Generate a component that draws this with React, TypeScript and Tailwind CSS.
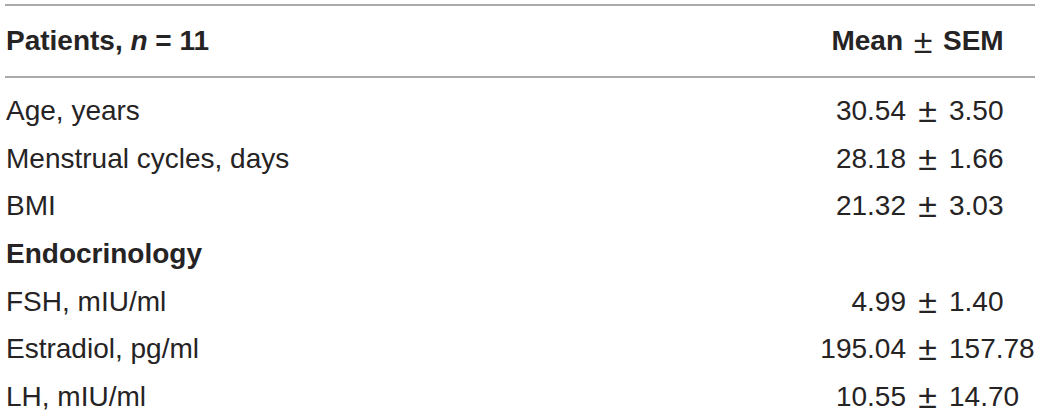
import React from "react";

const rows: Array<{ label: string; a?: string; b?: string; bold?: boolean }> = [
  { label: "Age, years", a: "30.54", b: "3.50" },
  { label: "Menstrual cycles, days", a: "28.18", b: "1.66" },
  { label: "BMI", a: "21.32", b: "3.03" },
  { label: "Endocrinology", bold: true },
  { label: "FSH, mIU/ml", a: "4.99", b: "1.40" },
  { label: "Estradiol, pg/ml", a: "195.04", b: "157.78" },
  { label: "LH, mIU/ml", a: "10.55", b: "14.70" },
];

export default function App() {
  return (
    <div
      className="w-[1040px] h-[415px] overflow-hidden bg-white text-[#262324]"
      style={{ fontFamily: '"Liberation Sans", Arial, Helvetica, sans-serif' }}
    >
      <div className="ml-[5px] w-[1030px] pt-[4px]">
        <div className="h-[2px] bg-[#a9a9a9]" />
        <div className="grid grid-cols-[755px_143px_40px_1fr] h-[70px] leading-[70px] text-[28px] font-bold">
          <div className="pl-[1px]">
            Patients, <i>n</i> = 11
          </div>
          <div className="text-right">Mean</div>
          <div className="text-center text-[34px] font-normal">±</div>
          <div>SEM</div>
        </div>
        <div className="h-[2px] bg-[#a9a9a9]" />
        <div className="pt-[9px]">
          {rows.map((r) => (
            <div
              key={r.label}
              className="grid grid-cols-[755px_146px_43px_1fr] h-[47.7px] leading-[47.7px] text-[28px] whitespace-nowrap"
            >
              <div className={r.bold ? "font-bold pl-[1px]" : "pl-[1px]"}>{r.label}</div>
              {r.a ? (
                <>
                  <div className="text-right">{r.a}</div>
                  <div className="text-center text-[34px]">±</div>
                  <div>{r.b}</div>
                </>
              ) : (
                <>
                  <div />
                  <div />
                  <div />
                </>
              )}
            </div>
          ))}
        </div>
      </div>
    </div>
  );
}
